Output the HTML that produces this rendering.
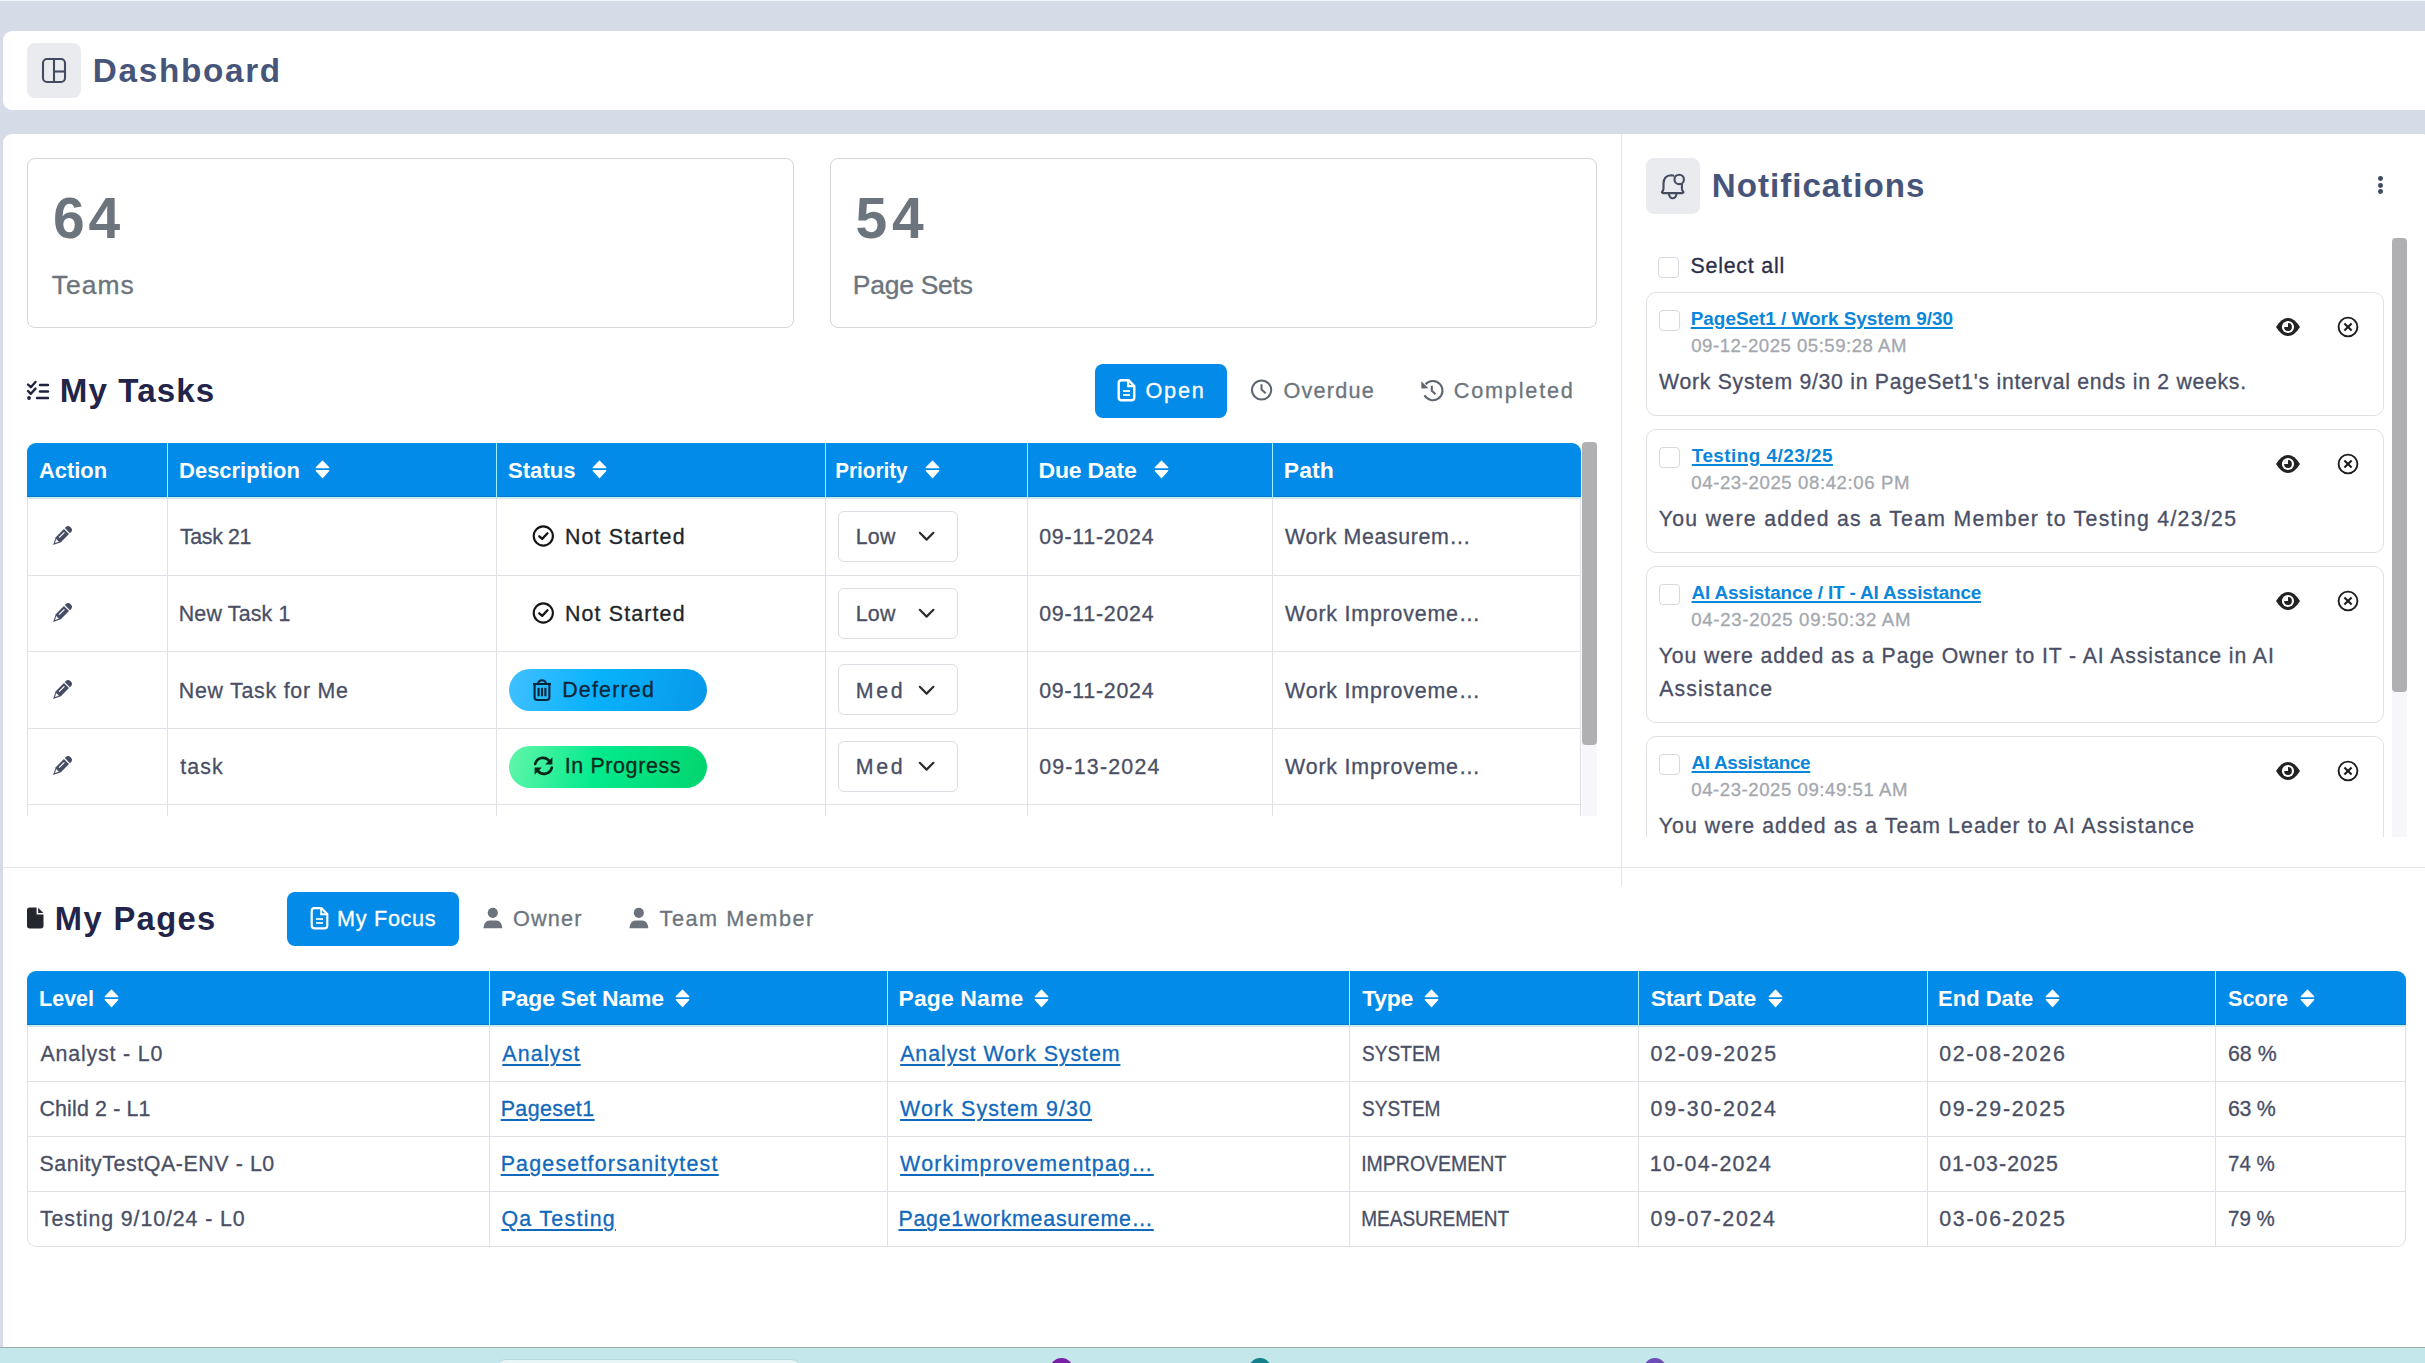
<!DOCTYPE html>
<html><head><meta charset="utf-8"><title>Dashboard</title>
<style>
html,body{margin:0;padding:0}
html{background:#d6dbe8;overflow:hidden}
body{width:2425px;height:1363px;position:relative;overflow:hidden;background:#d6dbe8;font-family:"Liberation Sans",sans-serif}
body div{position:absolute}
.t{white-space:pre}
</style></head><body>
<div style="left:0px;top:0px;width:2425px;height:1px;background:#f3f6fb"></div>
<div style="left:3px;top:31px;width:2440px;height:79px;background:#fff;border-radius:9px 0 0 9px"></div>
<div style="left:27px;top:43px;width:54px;height:55px;background:#e9ebef;border-radius:8px"></div>
<svg style="position:absolute;left:41px;top:57px;" width="26" height="27" viewBox="0 0 26 27"><g fill="none" stroke="#434b62" stroke-width="2.1"><rect x="2" y="2" width="22" height="23" rx="4"/><line x1="13" y1="2" x2="13" y2="25"/><line x1="13" y1="14.5" x2="24" y2="14.5"/></g></svg>
<div class="t" style="left:92.80px;top:54.00px;font-size:33.28px;line-height:33.28px;color:#465579;font-weight:bold;letter-spacing:1.693px;">Dashboard</div>
<div style="left:3px;top:134px;width:2428px;height:1213px;background:#fff;border-radius:9px 9px 0 0"></div>
<div style="left:0px;top:1347px;width:2425px;height:1px;background:#9eaaab"></div>
<div style="left:0px;top:1348px;width:2425px;height:15px;background:#c3e7ea"></div>
<div style="left:496px;top:1359px;width:305px;height:20px;background:#e8f6f8;border:1px solid #b5dadd;border-radius:10px;box-sizing:border-box"></div>
<div style="left:1050px;top:1358px;width:23px;height:23px;background:#7b1fa8;border-radius:50%"></div>
<div style="left:1249px;top:1358px;width:22px;height:22px;background:#11808a;border-radius:50%"></div>
<div style="left:1644px;top:1358px;width:22px;height:22px;background:#6c4cb8;border-radius:50%"></div>
<div style="left:27px;top:158px;width:767px;height:170px;border:1px solid #d6d6da;border-radius:8px;box-sizing:border-box"></div>
<div class="t" style="left:52.95px;top:190.00px;font-size:56.98px;line-height:56.98px;color:#6c757d;font-weight:bold;letter-spacing:3.978px;">64</div>
<div class="t" style="left:51.72px;top:272.00px;font-size:26.45px;line-height:26.45px;color:#6c757d;-webkit-text-stroke-width:0.3px;letter-spacing:1.032px;-webkit-text-stroke:0.35px #6c757d;">Teams</div>
<div style="left:830px;top:158px;width:767px;height:170px;border:1px solid #d6d6da;border-radius:8px;box-sizing:border-box"></div>
<div class="t" style="left:855.59px;top:190.00px;font-size:56.98px;line-height:56.98px;color:#6c757d;font-weight:bold;letter-spacing:4.636px;">54</div>
<div class="t" style="left:852.83px;top:272.00px;font-size:26.45px;line-height:26.45px;color:#6c757d;-webkit-text-stroke-width:0.3px;letter-spacing:-0.242px;-webkit-text-stroke:0.35px #6c757d;">Page Sets</div>
<svg style="position:absolute;left:25px;top:379px;" width="25" height="22" viewBox="0 0 25 22"><g fill="none" stroke="#1f2340" stroke-width="2.4" stroke-linecap="round" stroke-linejoin="round"><polyline points="3,5.5 5.8,8.2 10.5,3"/><polyline points="3,12 5.8,14.8 10.5,9.6"/><line x1="15" y1="6" x2="23" y2="6"/><line x1="15" y1="12.5" x2="23" y2="12.5"/><line x1="12" y1="19" x2="23" y2="19"/></g><circle cx="4" cy="19" r="1.9" fill="#1f2340"/></svg>
<div class="t" style="left:59.81px;top:374.00px;font-size:33.14px;line-height:33.14px;color:#232449;font-weight:bold;letter-spacing:1.110px;">My Tasks</div>
<div style="left:1095px;top:364px;width:132px;height:54px;background:#038be9;border-radius:8px"></div>
<svg style="position:absolute;left:1116px;top:377px;" width="21" height="26" viewBox="0 0 21 26"><path d="M4.5 3.2 H12.5 L18.3 9 V20.5 Q18.3 23.3 15.5 23.3 H5.5 Q2.7 23.3 2.7 20.5 V6 Q2.7 3.2 5.5 3.2 Z" fill="none" stroke="#fff" stroke-width="2.4" stroke-linejoin="round"/><path d="M12.2 3.5 V9.2 H18" fill="none" stroke="#fff" stroke-width="2.2"/><line x1="7" y1="14" x2="14" y2="14" stroke="#fff" stroke-width="1.8"/><line x1="7" y1="18" x2="14" y2="18" stroke="#fff" stroke-width="1.8"/></svg>
<div class="t" style="left:1145.38px;top:380.00px;font-size:21.66px;line-height:21.66px;color:#fff;-webkit-text-stroke-width:0.3px;letter-spacing:1.810px;">Open</div>
<svg style="position:absolute;left:1249px;top:378px;" width="25" height="25" viewBox="0 0 25 25"><g fill="none" stroke="#5e6670" stroke-width="2"><circle cx="12.6" cy="12" r="9.6"/><polyline points="12.5,6.2 12.5,11.6 16.7,15.3"/></g></svg>
<div class="t" style="left:1283.48px;top:380.00px;font-size:21.66px;line-height:21.66px;color:#6c757d;-webkit-text-stroke-width:0.3px;letter-spacing:1.219px;">Overdue</div>
<svg style="position:absolute;left:1419px;top:378px;" width="26" height="25" viewBox="0 0 26 25"><g fill="none" stroke="#5e6670" stroke-width="2.1"><path d="M6.6 6.3 A9.6 9.6 0 1 1 5.5 17.3"/><polyline points="12.8,7.8 12.8,12.8 16.5,16.3"/></g><path d="M2.3 3.2 L2.4 10.4 L9.4 10.3 Z" fill="#5e6670"/></svg>
<div class="t" style="left:1453.72px;top:380.00px;font-size:21.66px;line-height:21.66px;color:#6c757d;-webkit-text-stroke-width:0.3px;letter-spacing:1.804px;">Completed</div>
<div style="left:27px;top:443px;width:1554px;height:54px;background:#038be9;border-radius:9px 9px 0 0"></div>
<div style="left:27px;top:496px;width:1554px;height:1px;background:#0b78c8"></div>
<div style="left:27px;top:497px;width:1554px;height:1px;background:#b9f1fd"></div>
<div style="left:27px;top:498px;width:1554px;height:1px;background:#d6e6f4"></div>
<div style="left:167px;top:443px;width:1px;height:54px;background:#9ef2fe"></div>
<div style="left:496px;top:443px;width:1px;height:54px;background:#9ef2fe"></div>
<div style="left:825px;top:443px;width:1px;height:54px;background:#9ef2fe"></div>
<div style="left:1027px;top:443px;width:1px;height:54px;background:#9ef2fe"></div>
<div style="left:1272px;top:443px;width:1px;height:54px;background:#9ef2fe"></div>
<div style="left:27px;top:498px;width:1px;height:318px;background:#e0e1e7"></div>
<div style="left:1580px;top:498px;width:1px;height:318px;background:#e0e1e7"></div>
<div style="left:167px;top:498px;width:1px;height:318px;background:#e0e1e7"></div>
<div style="left:496px;top:498px;width:1px;height:318px;background:#e0e1e7"></div>
<div style="left:825px;top:498px;width:1px;height:318px;background:#e0e1e7"></div>
<div style="left:1027px;top:498px;width:1px;height:318px;background:#e0e1e7"></div>
<div style="left:1272px;top:498px;width:1px;height:318px;background:#e0e1e7"></div>
<div style="left:27px;top:575px;width:1554px;height:1px;background:#e0e1e7"></div>
<div style="left:27px;top:651px;width:1554px;height:1px;background:#e0e1e7"></div>
<div style="left:27px;top:728px;width:1554px;height:1px;background:#e0e1e7"></div>
<div style="left:27px;top:804px;width:1554px;height:1px;background:#e0e1e7"></div>
<div style="left:1582px;top:442px;width:15px;height:374px;background:#f7f7fb"></div>
<div style="left:1582px;top:442px;width:15px;height:303px;background:#b0b0b3;border-radius:4px"></div>
<div class="t" style="left:39.15px;top:459.00px;font-size:22.97px;line-height:22.97px;color:#fff;font-weight:bold;transform:scaleX(0.9529);transform-origin:0.55px 0;">Action</div>
<div class="t" style="left:178.88px;top:459.00px;font-size:22.97px;line-height:22.97px;color:#fff;font-weight:bold;transform:scaleX(0.9563);transform-origin:1.52px 0;">Description</div>
<svg style="position:absolute;left:315px;top:460px;" width="15" height="19" viewBox="0 0 15 19"><g fill="#fff" stroke="#fff" stroke-width="1.2" stroke-linejoin="round"><polygon points="1.2,7.6 7.5,1.2 13.8,7.6"/><polygon points="1.2,10.6 7.5,17.6 13.8,10.6"/></g></svg>
<div class="t" style="left:507.76px;top:459.00px;font-size:22.97px;line-height:22.97px;color:#fff;font-weight:bold;transform:scaleX(0.9618);transform-origin:0.64px 0;">Status</div>
<svg style="position:absolute;left:591.5px;top:460px;" width="15" height="19" viewBox="0 0 15 19"><g fill="#fff" stroke="#fff" stroke-width="1.2" stroke-linejoin="round"><polygon points="1.2,7.6 7.5,1.2 13.8,7.6"/><polygon points="1.2,10.6 7.5,17.6 13.8,10.6"/></g></svg>
<div class="t" style="left:835.48px;top:459.00px;font-size:22.97px;line-height:22.97px;color:#fff;font-weight:bold;transform:scaleX(0.9014);transform-origin:1.52px 0;">Priority</div>
<svg style="position:absolute;left:925px;top:460px;" width="15" height="19" viewBox="0 0 15 19"><g fill="#fff" stroke="#fff" stroke-width="1.2" stroke-linejoin="round"><polygon points="1.2,7.6 7.5,1.2 13.8,7.6"/><polygon points="1.2,10.6 7.5,17.6 13.8,10.6"/></g></svg>
<div class="t" style="left:1038.48px;top:459.00px;font-size:22.97px;line-height:22.97px;color:#fff;font-weight:bold;letter-spacing:-0.176px;">Due Date</div>
<svg style="position:absolute;left:1154px;top:460px;" width="15" height="19" viewBox="0 0 15 19"><g fill="#fff" stroke="#fff" stroke-width="1.2" stroke-linejoin="round"><polygon points="1.2,7.6 7.5,1.2 13.8,7.6"/><polygon points="1.2,10.6 7.5,17.6 13.8,10.6"/></g></svg>
<div class="t" style="left:1283.78px;top:459.00px;font-size:22.97px;line-height:22.97px;color:#fff;font-weight:bold;letter-spacing:0.058px;">Path</div>
<svg style="position:absolute;left:49px;top:523px;" width="26" height="26" viewBox="0 0 26 26"><g transform="translate(13 13) rotate(45)"><path d="M-3.6 -7.6 V-9.4 Q-3.6 -12.2 0 -12.2 Q3.6 -12.2 3.6 -9.4 V-7.6 Z" fill="#454c63"/><path d="M-3.6 -6.3 H3.6 V5.2 L0 12.6 L-3.6 5.2 Z" fill="#454c63"/><rect x="-1.5" y="-4.3" width="1.2" height="7.6" fill="#fff"/><path d="M-2.0 6.3 H2.0 L0 9.9 Z" fill="#fff"/></g></svg>
<div class="t" style="left:180.03px;top:527.00px;font-size:21.37px;line-height:21.37px;color:#4a4f66;-webkit-text-stroke-width:0.3px;letter-spacing:-0.355px;">Task 21</div>
<svg style="position:absolute;left:532px;top:525px;" width="24" height="24" viewBox="0 0 24 24"><g fill="none" stroke="#151515" stroke-width="2.1"><circle cx="11.3" cy="11" r="9.6"/><polyline points="7.3,11.3 10.2,13.9 15.5,8.3" stroke-linecap="round" stroke-linejoin="round" stroke-width="2.3"/></g></svg>
<div class="t" style="left:564.95px;top:527.00px;font-size:21.37px;line-height:21.37px;color:#212529;-webkit-text-stroke-width:0.3px;letter-spacing:1.155px;">Not Started</div>
<div style="left:838px;top:511px;width:120px;height:51px;border:1px solid #dcdee3;border-radius:6px;box-sizing:border-box;background:#fff"></div>
<div class="t" style="left:855.65px;top:527.00px;font-size:21.37px;line-height:21.37px;color:#4a4f66;-webkit-text-stroke-width:0.3px;letter-spacing:0.251px;">Low</div>
<svg style="position:absolute;left:918px;top:531px;" width="18" height="12" viewBox="0 0 18 12"><polyline points="1.8,1.8 8.6,8.6 15.4,1.8" fill="none" stroke="#2b2d30" stroke-width="2.2" stroke-linecap="round" stroke-linejoin="round"/></svg>
<div class="t" style="left:1039.17px;top:527.00px;font-size:21.37px;line-height:21.37px;color:#4a4f66;-webkit-text-stroke-width:0.3px;letter-spacing:0.749px;">09-11-2024</div>
<div class="t" style="left:1285.11px;top:527.00px;font-size:21.37px;line-height:21.37px;color:#4a4f66;-webkit-text-stroke-width:0.3px;letter-spacing:0.614px;">Work Measurem…</div>
<svg style="position:absolute;left:49px;top:600px;" width="26" height="26" viewBox="0 0 26 26"><g transform="translate(13 13) rotate(45)"><path d="M-3.6 -7.6 V-9.4 Q-3.6 -12.2 0 -12.2 Q3.6 -12.2 3.6 -9.4 V-7.6 Z" fill="#454c63"/><path d="M-3.6 -6.3 H3.6 V5.2 L0 12.6 L-3.6 5.2 Z" fill="#454c63"/><rect x="-1.5" y="-4.3" width="1.2" height="7.6" fill="#fff"/><path d="M-2.0 6.3 H2.0 L0 9.9 Z" fill="#fff"/></g></svg>
<div class="t" style="left:178.75px;top:604.00px;font-size:21.37px;line-height:21.37px;color:#4a4f66;-webkit-text-stroke-width:0.3px;letter-spacing:0.193px;">New Task 1</div>
<svg style="position:absolute;left:532px;top:602px;" width="24" height="24" viewBox="0 0 24 24"><g fill="none" stroke="#151515" stroke-width="2.1"><circle cx="11.3" cy="11" r="9.6"/><polyline points="7.3,11.3 10.2,13.9 15.5,8.3" stroke-linecap="round" stroke-linejoin="round" stroke-width="2.3"/></g></svg>
<div class="t" style="left:564.95px;top:604.00px;font-size:21.37px;line-height:21.37px;color:#212529;-webkit-text-stroke-width:0.3px;letter-spacing:1.155px;">Not Started</div>
<div style="left:838px;top:588px;width:120px;height:51px;border:1px solid #dcdee3;border-radius:6px;box-sizing:border-box;background:#fff"></div>
<div class="t" style="left:855.65px;top:604.00px;font-size:21.37px;line-height:21.37px;color:#4a4f66;-webkit-text-stroke-width:0.3px;letter-spacing:0.251px;">Low</div>
<svg style="position:absolute;left:918px;top:608px;" width="18" height="12" viewBox="0 0 18 12"><polyline points="1.8,1.8 8.6,8.6 15.4,1.8" fill="none" stroke="#2b2d30" stroke-width="2.2" stroke-linecap="round" stroke-linejoin="round"/></svg>
<div class="t" style="left:1039.17px;top:604.00px;font-size:21.37px;line-height:21.37px;color:#4a4f66;-webkit-text-stroke-width:0.3px;letter-spacing:0.749px;">09-11-2024</div>
<div class="t" style="left:1285.11px;top:604.00px;font-size:21.37px;line-height:21.37px;color:#4a4f66;-webkit-text-stroke-width:0.3px;letter-spacing:0.811px;">Work Improveme…</div>
<svg style="position:absolute;left:49px;top:677px;" width="26" height="26" viewBox="0 0 26 26"><g transform="translate(13 13) rotate(45)"><path d="M-3.6 -7.6 V-9.4 Q-3.6 -12.2 0 -12.2 Q3.6 -12.2 3.6 -9.4 V-7.6 Z" fill="#454c63"/><path d="M-3.6 -6.3 H3.6 V5.2 L0 12.6 L-3.6 5.2 Z" fill="#454c63"/><rect x="-1.5" y="-4.3" width="1.2" height="7.6" fill="#fff"/><path d="M-2.0 6.3 H2.0 L0 9.9 Z" fill="#fff"/></g></svg>
<div class="t" style="left:178.75px;top:681.00px;font-size:21.37px;line-height:21.37px;color:#4a4f66;-webkit-text-stroke-width:0.3px;letter-spacing:0.756px;">New Task for Me</div>
<div style="left:509px;top:669px;width:198px;height:42px;border-radius:21px;background:linear-gradient(105deg,#42c0ff 0%,#08b2fb 45%,#0897ea 100%)"></div>
<svg style="position:absolute;left:531px;top:678px;" width="22" height="24" viewBox="0 0 22 24"><g fill="none" stroke="#06263c" stroke-width="2.1" stroke-linejoin="round"><line x1="2" y1="6" x2="20" y2="6"/><path d="M6.8 6 Q7.6 2.2 11 2.2 Q14.4 2.2 15.2 6"/><path d="M3.6 6.5 V19.3 Q3.6 22 6.3 22 H15.7 Q18.4 22 18.4 19.3 V6.5"/><line x1="7.6" y1="9.8" x2="7.6" y2="18.2"/><line x1="11" y1="9.8" x2="11" y2="18.2"/><line x1="14.4" y1="9.8" x2="14.4" y2="18.2"/></g></svg>
<div class="t" style="left:562.15px;top:680.00px;font-size:21.37px;line-height:21.37px;color:#0f2638;-webkit-text-stroke-width:0.3px;letter-spacing:1.226px;">Deferred</div>
<div style="left:838px;top:664px;width:120px;height:51px;border:1px solid #dcdee3;border-radius:6px;box-sizing:border-box;background:#fff"></div>
<div class="t" style="left:855.65px;top:681.00px;font-size:21.37px;line-height:21.37px;color:#4a4f66;-webkit-text-stroke-width:0.3px;letter-spacing:2.781px;">Med</div>
<svg style="position:absolute;left:918px;top:685px;" width="18" height="12" viewBox="0 0 18 12"><polyline points="1.8,1.8 8.6,8.6 15.4,1.8" fill="none" stroke="#2b2d30" stroke-width="2.2" stroke-linecap="round" stroke-linejoin="round"/></svg>
<div class="t" style="left:1039.17px;top:681.00px;font-size:21.37px;line-height:21.37px;color:#4a4f66;-webkit-text-stroke-width:0.3px;letter-spacing:0.749px;">09-11-2024</div>
<div class="t" style="left:1285.11px;top:681.00px;font-size:21.37px;line-height:21.37px;color:#4a4f66;-webkit-text-stroke-width:0.3px;letter-spacing:0.811px;">Work Improveme…</div>
<svg style="position:absolute;left:49px;top:753px;" width="26" height="26" viewBox="0 0 26 26"><g transform="translate(13 13) rotate(45)"><path d="M-3.6 -7.6 V-9.4 Q-3.6 -12.2 0 -12.2 Q3.6 -12.2 3.6 -9.4 V-7.6 Z" fill="#454c63"/><path d="M-3.6 -6.3 H3.6 V5.2 L0 12.6 L-3.6 5.2 Z" fill="#454c63"/><rect x="-1.5" y="-4.3" width="1.2" height="7.6" fill="#fff"/><path d="M-2.0 6.3 H2.0 L0 9.9 Z" fill="#fff"/></g></svg>
<div class="t" style="left:180.18px;top:757.00px;font-size:21.37px;line-height:21.37px;color:#4a4f66;-webkit-text-stroke-width:0.3px;letter-spacing:1.131px;">task</div>
<div style="left:509px;top:746px;width:198px;height:42px;border-radius:21px;background:linear-gradient(105deg,#62f6aa 0%,#03ea8d 45%,#02d46d 100%)"></div>
<svg style="position:absolute;left:532px;top:755px;" width="23" height="22" viewBox="0 0 23 22"><g fill="none" stroke="#07241a" stroke-width="2.6" stroke-linecap="round"><path d="M3.2 9 A8 8 0 0 1 17.4 6.2"/><path d="M19.8 12.6 A8 8 0 0 1 5.6 15.6"/></g><path d="M20.4 2.2 V9.4 H13.2 Z" fill="#07241a"/><path d="M2.6 19.8 V12.6 H9.8 Z" fill="#07241a"/></svg>
<div class="t" style="left:564.73px;top:756.00px;font-size:21.37px;line-height:21.37px;color:#0c2a1d;-webkit-text-stroke-width:0.3px;letter-spacing:0.649px;">In Progress</div>
<div style="left:838px;top:741px;width:120px;height:51px;border:1px solid #dcdee3;border-radius:6px;box-sizing:border-box;background:#fff"></div>
<div class="t" style="left:855.65px;top:757.00px;font-size:21.37px;line-height:21.37px;color:#4a4f66;-webkit-text-stroke-width:0.3px;letter-spacing:2.781px;">Med</div>
<svg style="position:absolute;left:918px;top:761px;" width="18" height="12" viewBox="0 0 18 12"><polyline points="1.8,1.8 8.6,8.6 15.4,1.8" fill="none" stroke="#2b2d30" stroke-width="2.2" stroke-linecap="round" stroke-linejoin="round"/></svg>
<div class="t" style="left:1039.17px;top:757.00px;font-size:21.37px;line-height:21.37px;color:#4a4f66;-webkit-text-stroke-width:0.3px;letter-spacing:1.218px;">09-13-2024</div>
<div class="t" style="left:1285.11px;top:757.00px;font-size:21.37px;line-height:21.37px;color:#4a4f66;-webkit-text-stroke-width:0.3px;letter-spacing:0.811px;">Work Improveme…</div>
<div style="left:3px;top:867px;width:2422px;height:1px;background:#e3e4ea"></div>
<div style="left:1621px;top:134px;width:1px;height:752px;background:#e3e4ea"></div>
<div style="left:1646px;top:158px;width:54px;height:56px;background:#e9ebef;border-radius:8px"></div>
<svg style="position:absolute;left:1659px;top:171px;" width="28" height="30" viewBox="0 0 28 30"><g fill="none" stroke="#454c5f" stroke-width="2.1" stroke-linejoin="round"><path d="M15.2 4.7 Q13.6 4.3 12 4.3 Q4.8 4.5 4.5 12.5 V17.5 Q4.5 19.6 3.1 20.6 Q2.5 22.1 4.2 22.1 H23.2 Q24.9 22.1 24.3 20.6 Q22.9 19.6 22.9 17.5 V12.9"/><circle cx="20.2" cy="8.4" r="4.7"/><path d="M9.8 22.3 Q10.4 27.2 13.7 27.2 Q17 27.2 17.6 22.3"/></g></svg>
<div class="t" style="left:1711.81px;top:169.00px;font-size:33.14px;line-height:33.14px;color:#465579;font-weight:bold;letter-spacing:1.002px;">Notifications</div>
<div style="left:2378.2px;top:176.2px;width:4.8px;height:4.8px;background:#3f4a66;border-radius:50%"></div>
<div style="left:2378.2px;top:182.8px;width:4.8px;height:4.8px;background:#3f4a66;border-radius:50%"></div>
<div style="left:2378.2px;top:189.4px;width:4.8px;height:4.8px;background:#3f4a66;border-radius:50%"></div>
<div style="left:1622px;top:228px;width:803px;height:609px;overflow:hidden">
<div style="left:770px;top:10px;width:15px;height:600px;background:#f7f7fb"></div>
<div style="left:770px;top:10px;width:15px;height:454px;background:#b0b0b3;border-radius:4px"></div>
<div style="left:36px;top:29px;width:21px;height:21px;border:1px solid #d8d9de;border-radius:4px;box-sizing:border-box"></div>
<div class="t" style="left:68.44px;top:28.00px;font-size:21.37px;line-height:21.37px;color:#2c2d48;-webkit-text-stroke-width:0.3px;letter-spacing:0.788px;">Select all</div>
<div style="left:24px;top:64px;width:738px;height:124px;border:1px solid #e0e1e6;border-radius:10px;box-sizing:border-box"></div>
<div style="left:37px;top:82.2px;width:21px;height:21px;border:1px solid #d8d9de;border-radius:4px;box-sizing:border-box"></div>
<div class="t" style="left:68.75px;top:82.00px;font-size:18.90px;line-height:18.90px;color:#0a86da;font-weight:bold;text-decoration:underline;text-decoration-thickness:1.5px;text-underline-offset:2px;">PageSet1 / Work System 9/30</div>
<div class="t" style="left:69.27px;top:109.00px;font-size:18.60px;line-height:18.60px;color:#a4a7ae;-webkit-text-stroke-width:0.3px;letter-spacing:0.498px;">09-12-2025 05:59:28 AM</div>
<div class="t" style="left:37.12px;top:143.00px;font-size:21.22px;line-height:21.22px;color:#4a4f66;-webkit-text-stroke-width:0.3px;letter-spacing:0.720px;">Work System 9/30 in PageSet1's interval ends in 2 weeks.</div>
<svg style="position:absolute;left:653px;top:89.2px;" width="26" height="20" viewBox="0 0 26 20"><path d="M1 10 Q6.5 1 13 1 Q19.5 1 25 10 Q19.5 19 13 19 Q6.5 19 1 10 Z" fill="#222"/><circle cx="13" cy="10" r="6.1" fill="#fff"/><circle cx="13" cy="10" r="3.9" fill="#222"/><path d="M13 10 L13 5.6 A4.4 4.4 0 0 0 8.6 10 Z" fill="#fff"/></svg>
<svg style="position:absolute;left:714px;top:87.2px;" width="24" height="24" viewBox="0 0 24 24"><g fill="none" stroke="#1d1d1d" stroke-width="1.9"><circle cx="12" cy="12" r="9.4"/><line x1="8.4" y1="8.4" x2="15.6" y2="15.6" stroke-width="2.1"/><line x1="15.6" y1="8.4" x2="8.4" y2="15.6" stroke-width="2.1"/></g></svg>
<div style="left:24px;top:201px;width:738px;height:124px;border:1px solid #e0e1e6;border-radius:10px;box-sizing:border-box"></div>
<div style="left:37px;top:219.2px;width:21px;height:21px;border:1px solid #d8d9de;border-radius:4px;box-sizing:border-box"></div>
<div class="t" style="left:69.79px;top:219.00px;font-size:18.90px;line-height:18.90px;color:#0a86da;font-weight:bold;letter-spacing:0.474px;text-decoration:underline;text-decoration-thickness:1.5px;text-underline-offset:2px;">Testing 4/23/25</div>
<div class="t" style="left:69.27px;top:246.00px;font-size:18.60px;line-height:18.60px;color:#a4a7ae;-webkit-text-stroke-width:0.3px;letter-spacing:0.591px;">04-23-2025 08:42:06 PM</div>
<div class="t" style="left:36.73px;top:280.00px;font-size:21.22px;line-height:21.22px;color:#4a4f66;-webkit-text-stroke-width:0.3px;letter-spacing:1.317px;">You were added as a Team Member to Testing 4/23/25</div>
<svg style="position:absolute;left:653px;top:226.2px;" width="26" height="20" viewBox="0 0 26 20"><path d="M1 10 Q6.5 1 13 1 Q19.5 1 25 10 Q19.5 19 13 19 Q6.5 19 1 10 Z" fill="#222"/><circle cx="13" cy="10" r="6.1" fill="#fff"/><circle cx="13" cy="10" r="3.9" fill="#222"/><path d="M13 10 L13 5.6 A4.4 4.4 0 0 0 8.6 10 Z" fill="#fff"/></svg>
<svg style="position:absolute;left:714px;top:224.2px;" width="24" height="24" viewBox="0 0 24 24"><g fill="none" stroke="#1d1d1d" stroke-width="1.9"><circle cx="12" cy="12" r="9.4"/><line x1="8.4" y1="8.4" x2="15.6" y2="15.6" stroke-width="2.1"/><line x1="15.6" y1="8.4" x2="8.4" y2="15.6" stroke-width="2.1"/></g></svg>
<div style="left:24px;top:338px;width:738px;height:157px;border:1px solid #e0e1e6;border-radius:10px;box-sizing:border-box"></div>
<div style="left:37px;top:356.1px;width:21px;height:21px;border:1px solid #d8d9de;border-radius:4px;box-sizing:border-box"></div>
<div class="t" style="left:69.55px;top:356.00px;font-size:18.90px;line-height:18.90px;color:#0a86da;font-weight:bold;letter-spacing:-0.160px;text-decoration:underline;text-decoration-thickness:1.5px;text-underline-offset:2px;">AI Assistance / IT - AI Assistance</div>
<div class="t" style="left:69.27px;top:383.00px;font-size:18.60px;line-height:18.60px;color:#a4a7ae;-webkit-text-stroke-width:0.3px;letter-spacing:0.688px;">04-23-2025 09:50:32 AM</div>
<div class="t" style="left:36.73px;top:417.00px;font-size:21.22px;line-height:21.22px;color:#4a4f66;-webkit-text-stroke-width:0.3px;letter-spacing:0.920px;">You were added as a Page Owner to IT - AI Assistance in AI</div>
<div class="t" style="left:37.16px;top:450.00px;font-size:21.22px;line-height:21.22px;color:#4a4f66;-webkit-text-stroke-width:0.3px;letter-spacing:1.153px;">Assistance</div>
<svg style="position:absolute;left:653px;top:363.1px;" width="26" height="20" viewBox="0 0 26 20"><path d="M1 10 Q6.5 1 13 1 Q19.5 1 25 10 Q19.5 19 13 19 Q6.5 19 1 10 Z" fill="#222"/><circle cx="13" cy="10" r="6.1" fill="#fff"/><circle cx="13" cy="10" r="3.9" fill="#222"/><path d="M13 10 L13 5.6 A4.4 4.4 0 0 0 8.6 10 Z" fill="#fff"/></svg>
<svg style="position:absolute;left:714px;top:361.1px;" width="24" height="24" viewBox="0 0 24 24"><g fill="none" stroke="#1d1d1d" stroke-width="1.9"><circle cx="12" cy="12" r="9.4"/><line x1="8.4" y1="8.4" x2="15.6" y2="15.6" stroke-width="2.1"/><line x1="15.6" y1="8.4" x2="8.4" y2="15.6" stroke-width="2.1"/></g></svg>
<div style="left:24px;top:508px;width:738px;height:157px;border:1px solid #e0e1e6;border-radius:10px;box-sizing:border-box"></div>
<div style="left:37px;top:526.2px;width:21px;height:21px;border:1px solid #d8d9de;border-radius:4px;box-sizing:border-box"></div>
<div class="t" style="left:69.55px;top:526.00px;font-size:18.90px;line-height:18.90px;color:#0a86da;font-weight:bold;letter-spacing:-0.343px;text-decoration:underline;text-decoration-thickness:1.5px;text-underline-offset:2px;">AI Assistance</div>
<div class="t" style="left:69.27px;top:553.00px;font-size:18.60px;line-height:18.60px;color:#a4a7ae;-webkit-text-stroke-width:0.3px;letter-spacing:0.545px;">04-23-2025 09:49:51 AM</div>
<div class="t" style="left:36.73px;top:587.00px;font-size:21.22px;line-height:21.22px;color:#4a4f66;-webkit-text-stroke-width:0.3px;letter-spacing:1.100px;">You were added as a Team Leader to AI Assistance</div>
<svg style="position:absolute;left:653px;top:533.2px;" width="26" height="20" viewBox="0 0 26 20"><path d="M1 10 Q6.5 1 13 1 Q19.5 1 25 10 Q19.5 19 13 19 Q6.5 19 1 10 Z" fill="#222"/><circle cx="13" cy="10" r="6.1" fill="#fff"/><circle cx="13" cy="10" r="3.9" fill="#222"/><path d="M13 10 L13 5.6 A4.4 4.4 0 0 0 8.6 10 Z" fill="#fff"/></svg>
<svg style="position:absolute;left:714px;top:531.2px;" width="24" height="24" viewBox="0 0 24 24"><g fill="none" stroke="#1d1d1d" stroke-width="1.9"><circle cx="12" cy="12" r="9.4"/><line x1="8.4" y1="8.4" x2="15.6" y2="15.6" stroke-width="2.1"/><line x1="15.6" y1="8.4" x2="8.4" y2="15.6" stroke-width="2.1"/></g></svg>
</div>
<svg style="position:absolute;left:26px;top:906px;" width="19" height="24" viewBox="0 0 19 24"><path d="M3.5 1.5 H10.6 V8.6 H17.5 V19.8 Q17.5 22.5 14.8 22.5 H3.7 Q1 22.5 1 19.8 V4.2 Q1 1.5 3.5 1.5 Z" fill="#24272d"/><path d="M12.2 1.7 L17.3 6.9 H12.2 Z" fill="#24272d"/></svg>
<div class="t" style="left:54.84px;top:903.00px;font-size:32.70px;line-height:32.70px;color:#232449;font-weight:bold;letter-spacing:1.372px;">My Pages</div>
<div style="left:287px;top:892px;width:172px;height:54px;background:#038be9;border-radius:8px"></div>
<svg style="position:absolute;left:309px;top:905px;" width="21" height="26" viewBox="0 0 21 26"><path d="M4.5 3.2 H12.5 L18.3 9 V20.5 Q18.3 23.3 15.5 23.3 H5.5 Q2.7 23.3 2.7 20.5 V6 Q2.7 3.2 5.5 3.2 Z" fill="none" stroke="#fff" stroke-width="2.2" stroke-linejoin="round"/><path d="M12.2 3.5 V9.2 H18" fill="none" stroke="#fff" stroke-width="2"/><line x1="7" y1="14" x2="14" y2="14" stroke="#fff" stroke-width="1.7"/><line x1="7" y1="18" x2="14" y2="18" stroke="#fff" stroke-width="1.7"/></svg>
<div class="t" style="left:337.12px;top:908.00px;font-size:21.66px;line-height:21.66px;color:#fff;-webkit-text-stroke-width:0.3px;letter-spacing:0.671px;">My Focus</div>
<svg style="position:absolute;left:483px;top:907px;" width="20" height="22" viewBox="0 0 20 22"><circle cx="9.8" cy="5.8" r="5.1" fill="#6c737c"/><path d="M0.4 21.2 Q1.2 13.4 6.5 13.4 H13.3 Q18.6 13.4 19.4 21.2 Z" fill="#6c737c"/></svg>
<div class="t" style="left:512.98px;top:908.00px;font-size:21.66px;line-height:21.66px;color:#6c757d;-webkit-text-stroke-width:0.3px;letter-spacing:1.146px;">Owner</div>
<svg style="position:absolute;left:629px;top:907px;" width="20" height="22" viewBox="0 0 20 22"><circle cx="9.8" cy="5.8" r="5.1" fill="#6c737c"/><path d="M0.4 21.2 Q1.2 13.4 6.5 13.4 H13.3 Q18.6 13.4 19.4 21.2 Z" fill="#6c737c"/></svg>
<div class="t" style="left:659.52px;top:908.00px;font-size:21.66px;line-height:21.66px;color:#6c757d;-webkit-text-stroke-width:0.3px;letter-spacing:1.541px;">Team Member</div>
<div style="left:27px;top:971px;width:2379px;height:54px;background:#038be9;border-radius:9px 9px 0 0"></div>
<div style="left:27px;top:1024px;width:2379px;height:1px;background:#0b78c8"></div>
<div style="left:27px;top:1025px;width:2379px;height:1px;background:#b9f1fd"></div>
<div style="left:27px;top:1026px;width:2379px;height:1px;background:#d6e6f4"></div>
<div style="left:489px;top:971px;width:1px;height:54px;background:#9ef2fe"></div>
<div style="left:887px;top:971px;width:1px;height:54px;background:#9ef2fe"></div>
<div style="left:1349px;top:971px;width:1px;height:54px;background:#9ef2fe"></div>
<div style="left:1638px;top:971px;width:1px;height:54px;background:#9ef2fe"></div>
<div style="left:1927px;top:971px;width:1px;height:54px;background:#9ef2fe"></div>
<div style="left:2215px;top:971px;width:1px;height:54px;background:#9ef2fe"></div>
<div style="left:27px;top:1026px;width:2379px;height:221px;border:1px solid #e0e1e7;border-top:none;border-radius:0 0 9px 9px;box-sizing:border-box"></div>
<div style="left:489px;top:1026px;width:1px;height:220px;background:#e0e1e7"></div>
<div style="left:887px;top:1026px;width:1px;height:220px;background:#e0e1e7"></div>
<div style="left:1349px;top:1026px;width:1px;height:220px;background:#e0e1e7"></div>
<div style="left:1638px;top:1026px;width:1px;height:220px;background:#e0e1e7"></div>
<div style="left:1927px;top:1026px;width:1px;height:220px;background:#e0e1e7"></div>
<div style="left:2215px;top:1026px;width:1px;height:220px;background:#e0e1e7"></div>
<div style="left:28px;top:1081px;width:2377px;height:1px;background:#e0e1e7"></div>
<div style="left:28px;top:1136px;width:2377px;height:1px;background:#e0e1e7"></div>
<div style="left:28px;top:1191px;width:2377px;height:1px;background:#e0e1e7"></div>
<div class="t" style="left:38.58px;top:987.00px;font-size:22.97px;line-height:22.97px;color:#fff;font-weight:bold;transform:scaleX(0.9353);transform-origin:1.52px 0;">Level</div>
<svg style="position:absolute;left:104px;top:988.5px;" width="15" height="19" viewBox="0 0 15 19"><g fill="#fff" stroke="#fff" stroke-width="1.2" stroke-linejoin="round"><polygon points="1.2,7.6 7.5,1.2 13.8,7.6"/><polygon points="1.2,10.6 7.5,17.6 13.8,10.6"/></g></svg>
<div class="t" style="left:500.68px;top:987.00px;font-size:22.97px;line-height:22.97px;color:#fff;font-weight:bold;letter-spacing:-0.219px;">Page Set Name</div>
<svg style="position:absolute;left:675px;top:988.5px;" width="15" height="19" viewBox="0 0 15 19"><g fill="#fff" stroke="#fff" stroke-width="1.2" stroke-linejoin="round"><polygon points="1.2,7.6 7.5,1.2 13.8,7.6"/><polygon points="1.2,10.6 7.5,17.6 13.8,10.6"/></g></svg>
<div class="t" style="left:898.48px;top:987.00px;font-size:22.97px;line-height:22.97px;color:#fff;font-weight:bold;letter-spacing:0.124px;">Page Name</div>
<svg style="position:absolute;left:1033.5px;top:988.5px;" width="15" height="19" viewBox="0 0 15 19"><g fill="#fff" stroke="#fff" stroke-width="1.2" stroke-linejoin="round"><polygon points="1.2,7.6 7.5,1.2 13.8,7.6"/><polygon points="1.2,10.6 7.5,17.6 13.8,10.6"/></g></svg>
<div class="t" style="left:1362.25px;top:987.00px;font-size:22.97px;line-height:22.97px;color:#fff;font-weight:bold;letter-spacing:-0.289px;">Type</div>
<svg style="position:absolute;left:1423.5px;top:988.5px;" width="15" height="19" viewBox="0 0 15 19"><g fill="#fff" stroke="#fff" stroke-width="1.2" stroke-linejoin="round"><polygon points="1.2,7.6 7.5,1.2 13.8,7.6"/><polygon points="1.2,10.6 7.5,17.6 13.8,10.6"/></g></svg>
<div class="t" style="left:1650.66px;top:987.00px;font-size:22.97px;line-height:22.97px;color:#fff;font-weight:bold;letter-spacing:-0.307px;">Start Date</div>
<svg style="position:absolute;left:1767.5px;top:988.5px;" width="15" height="19" viewBox="0 0 15 19"><g fill="#fff" stroke="#fff" stroke-width="1.2" stroke-linejoin="round"><polygon points="1.2,7.6 7.5,1.2 13.8,7.6"/><polygon points="1.2,10.6 7.5,17.6 13.8,10.6"/></g></svg>
<div class="t" style="left:1938.28px;top:987.00px;font-size:22.97px;line-height:22.97px;color:#fff;font-weight:bold;transform:scaleX(0.9565);transform-origin:1.52px 0;">End Date</div>
<svg style="position:absolute;left:2045px;top:988.5px;" width="15" height="19" viewBox="0 0 15 19"><g fill="#fff" stroke="#fff" stroke-width="1.2" stroke-linejoin="round"><polygon points="1.2,7.6 7.5,1.2 13.8,7.6"/><polygon points="1.2,10.6 7.5,17.6 13.8,10.6"/></g></svg>
<div class="t" style="left:2228.06px;top:987.00px;font-size:22.97px;line-height:22.97px;color:#fff;font-weight:bold;transform:scaleX(0.9408);transform-origin:0.64px 0;">Score</div>
<svg style="position:absolute;left:2299.5px;top:988.5px;" width="15" height="19" viewBox="0 0 15 19"><g fill="#fff" stroke="#fff" stroke-width="1.2" stroke-linejoin="round"><polygon points="1.2,7.6 7.5,1.2 13.8,7.6"/><polygon points="1.2,10.6 7.5,17.6 13.8,10.6"/></g></svg>
<div class="t" style="left:40.46px;top:1044.00px;font-size:21.37px;line-height:21.37px;color:#4a4f66;-webkit-text-stroke-width:0.3px;letter-spacing:0.822px;">Analyst - L0</div>
<div class="t" style="left:502.36px;top:1044.00px;font-size:21.37px;line-height:21.37px;color:#1169bb;-webkit-text-stroke-width:0.3px;letter-spacing:1.189px;text-decoration:underline;text-decoration-thickness:1.5px;text-underline-offset:3px;">Analyst</div>
<div class="t" style="left:900.16px;top:1044.00px;font-size:21.37px;line-height:21.37px;color:#1169bb;-webkit-text-stroke-width:0.3px;letter-spacing:0.933px;text-decoration:underline;text-decoration-thickness:1.5px;text-underline-offset:3px;">Analyst Work System</div>
<div class="t" style="left:1361.54px;top:1044.00px;font-size:21.37px;line-height:21.37px;color:#4a4f66;-webkit-text-stroke-width:0.3px;transform:scaleX(0.8926);transform-origin:0.96px 0;">SYSTEM</div>
<div class="t" style="left:1650.47px;top:1044.00px;font-size:21.37px;line-height:21.37px;color:#4a4f66;-webkit-text-stroke-width:0.3px;letter-spacing:1.825px;">02-09-2025</div>
<div class="t" style="left:1939.17px;top:1044.00px;font-size:21.37px;line-height:21.37px;color:#4a4f66;-webkit-text-stroke-width:0.3px;letter-spacing:1.829px;">02-08-2026</div>
<div class="t" style="left:2227.93px;top:1044.00px;font-size:21.37px;line-height:21.37px;color:#4a4f66;-webkit-text-stroke-width:0.3px;letter-spacing:0.041px;">68 %</div>
<div class="t" style="left:39.43px;top:1099.00px;font-size:21.37px;line-height:21.37px;color:#4a4f66;-webkit-text-stroke-width:0.3px;letter-spacing:0.166px;">Child 2 - L1</div>
<div class="t" style="left:500.65px;top:1099.00px;font-size:21.37px;line-height:21.37px;color:#1169bb;-webkit-text-stroke-width:0.3px;letter-spacing:0.458px;text-decoration:underline;text-decoration-thickness:1.5px;text-underline-offset:3px;">Pageset1</div>
<div class="t" style="left:900.11px;top:1099.00px;font-size:21.37px;line-height:21.37px;color:#1169bb;-webkit-text-stroke-width:0.3px;letter-spacing:1.116px;text-decoration:underline;text-decoration-thickness:1.5px;text-underline-offset:3px;">Work System 9/30</div>
<div class="t" style="left:1361.54px;top:1099.00px;font-size:21.37px;line-height:21.37px;color:#4a4f66;-webkit-text-stroke-width:0.3px;transform:scaleX(0.8926);transform-origin:0.96px 0;">SYSTEM</div>
<div class="t" style="left:1650.47px;top:1099.00px;font-size:21.37px;line-height:21.37px;color:#4a4f66;-webkit-text-stroke-width:0.3px;letter-spacing:1.796px;">09-30-2024</div>
<div class="t" style="left:1939.17px;top:1099.00px;font-size:21.37px;line-height:21.37px;color:#4a4f66;-webkit-text-stroke-width:0.3px;letter-spacing:1.825px;">09-29-2025</div>
<div class="t" style="left:2227.93px;top:1099.00px;font-size:21.37px;line-height:21.37px;color:#4a4f66;-webkit-text-stroke-width:0.3px;letter-spacing:-0.293px;">63 %</div>
<div class="t" style="left:39.54px;top:1154.00px;font-size:21.37px;line-height:21.37px;color:#4a4f66;-webkit-text-stroke-width:0.3px;letter-spacing:0.577px;">SanityTestQA-ENV - L0</div>
<div class="t" style="left:500.65px;top:1154.00px;font-size:21.37px;line-height:21.37px;color:#1169bb;-webkit-text-stroke-width:0.3px;letter-spacing:1.226px;text-decoration:underline;text-decoration-thickness:1.5px;text-underline-offset:3px;">Pagesetforsanitytest</div>
<div class="t" style="left:900.11px;top:1154.00px;font-size:21.37px;line-height:21.37px;color:#1169bb;-webkit-text-stroke-width:0.3px;letter-spacing:1.250px;text-decoration:underline;text-decoration-thickness:1.5px;text-underline-offset:3px;">Workimprovementpag…</div>
<div class="t" style="left:1360.53px;top:1154.00px;font-size:21.37px;line-height:21.37px;color:#4a4f66;-webkit-text-stroke-width:0.3px;transform:scaleX(0.9131);transform-origin:1.97px 0;">IMPROVEMENT</div>
<div class="t" style="left:1649.68px;top:1154.00px;font-size:21.37px;line-height:21.37px;color:#4a4f66;-webkit-text-stroke-width:0.3px;letter-spacing:1.328px;">10-04-2024</div>
<div class="t" style="left:1939.17px;top:1154.00px;font-size:21.37px;line-height:21.37px;color:#4a4f66;-webkit-text-stroke-width:0.3px;letter-spacing:1.047px;">01-03-2025</div>
<div class="t" style="left:2227.91px;top:1154.00px;font-size:21.37px;line-height:21.37px;color:#4a4f66;-webkit-text-stroke-width:0.3px;transform:scaleX(0.9604);transform-origin:1.09px 0;">74 %</div>
<div class="t" style="left:40.03px;top:1209.00px;font-size:21.37px;line-height:21.37px;color:#4a4f66;-webkit-text-stroke-width:0.3px;letter-spacing:0.900px;">Testing 9/10/24 - L0</div>
<div class="t" style="left:501.40px;top:1209.00px;font-size:21.37px;line-height:21.37px;color:#1169bb;-webkit-text-stroke-width:0.3px;letter-spacing:1.292px;text-decoration:underline;text-decoration-thickness:1.5px;text-underline-offset:3px;">Qa Testing</div>
<div class="t" style="left:898.45px;top:1209.00px;font-size:21.37px;line-height:21.37px;color:#1169bb;-webkit-text-stroke-width:0.3px;letter-spacing:0.753px;text-decoration:underline;text-decoration-thickness:1.5px;text-underline-offset:3px;">Page1workmeasureme…</div>
<div class="t" style="left:1360.75px;top:1209.00px;font-size:21.37px;line-height:21.37px;color:#4a4f66;-webkit-text-stroke-width:0.3px;transform:scaleX(0.8904);transform-origin:1.75px 0;">MEASUREMENT</div>
<div class="t" style="left:1650.47px;top:1209.00px;font-size:21.37px;line-height:21.37px;color:#4a4f66;-webkit-text-stroke-width:0.3px;letter-spacing:1.685px;">09-07-2024</div>
<div class="t" style="left:1939.17px;top:1209.00px;font-size:21.37px;line-height:21.37px;color:#4a4f66;-webkit-text-stroke-width:0.3px;letter-spacing:1.825px;">03-06-2025</div>
<div class="t" style="left:2227.91px;top:1209.00px;font-size:21.37px;line-height:21.37px;color:#4a4f66;-webkit-text-stroke-width:0.3px;transform:scaleX(0.9604);transform-origin:1.09px 0;">79 %</div>
</body></html>
